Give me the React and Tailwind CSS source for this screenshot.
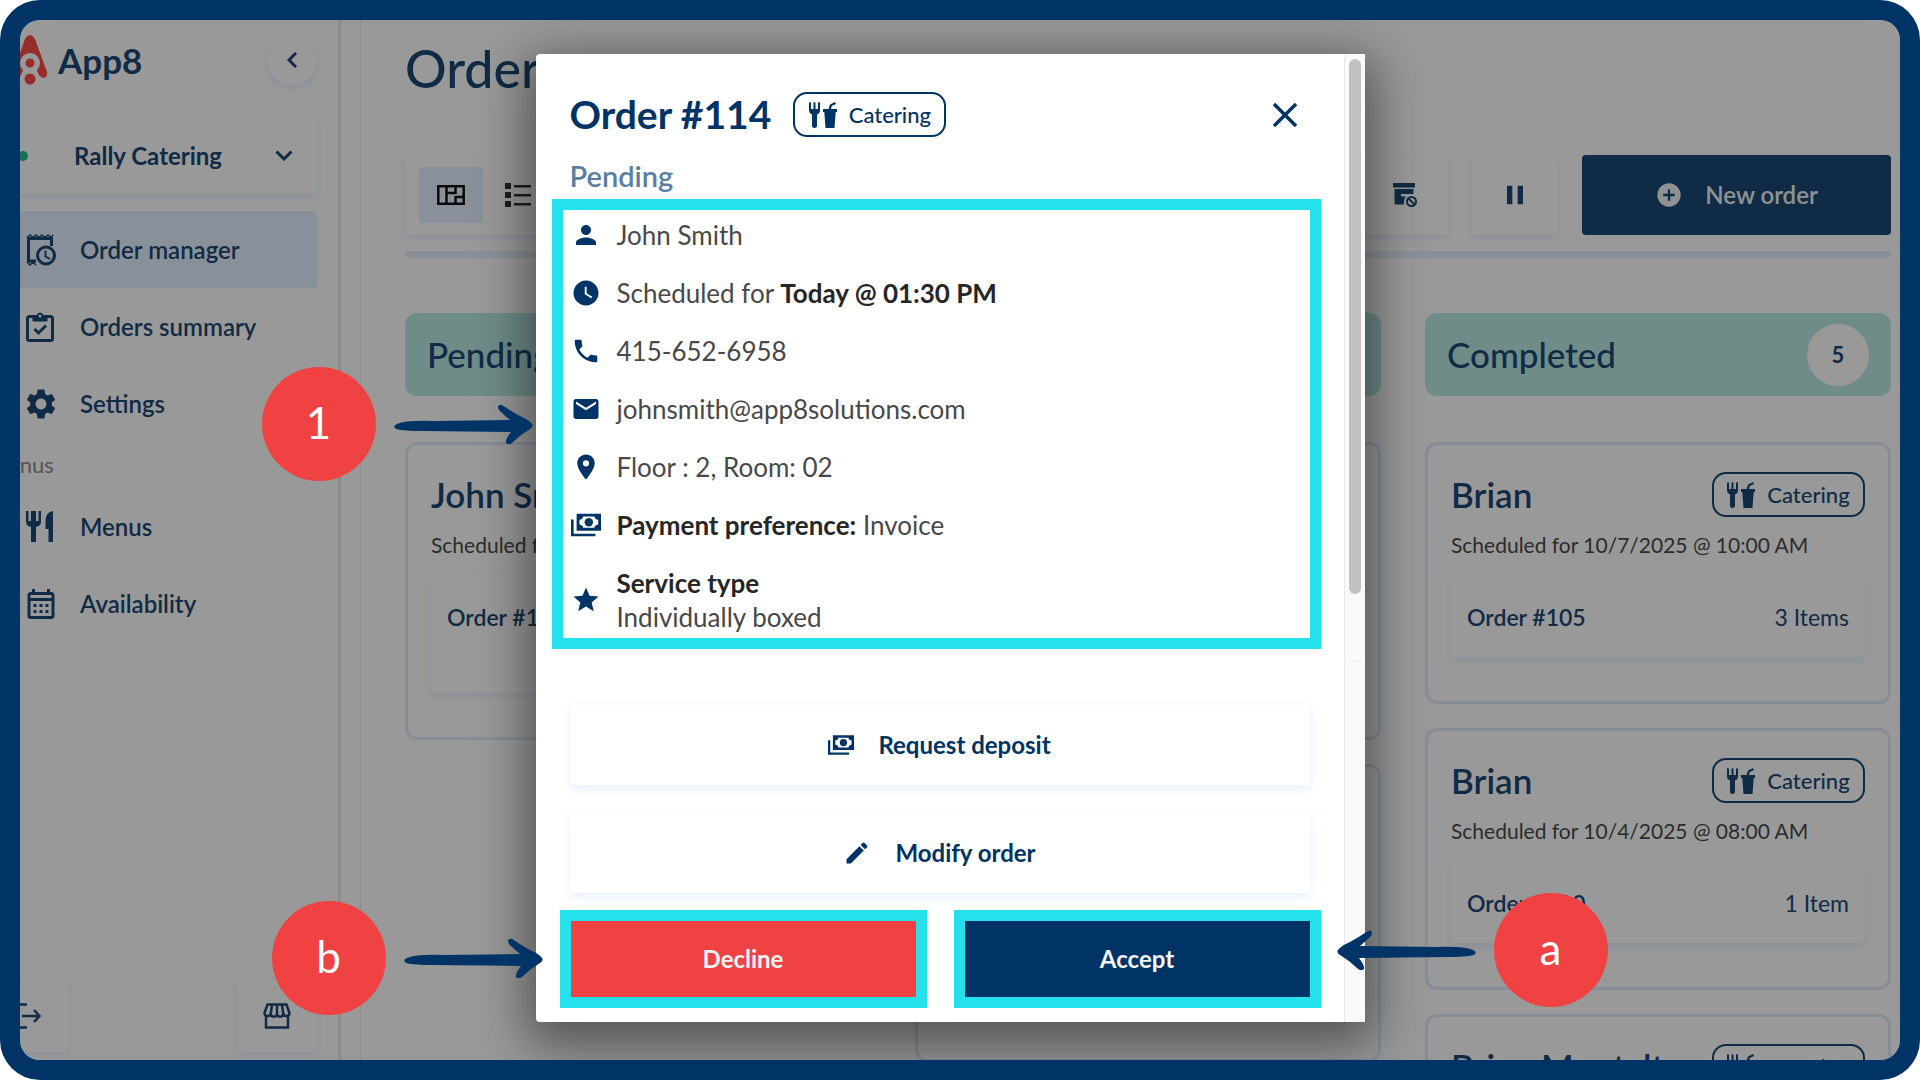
import {
  MdAddCircle,
  MdClose,
  MdEdit,
  MdEmail,
  MdLocationOn,
  MdOutlineCalendarMonth,
  MdPause,
  MdPerson,
  MdPhone,
  MdSettings,
  MdStar,
  MdWatchLater,
} from "react-icons/md";

function AppLogo() {
  return (
    <svg viewBox="0 0 56 50" className="h-[50px] w-14" aria-hidden="true">
      <path d="M23 4Q28 -4 33 4L45 37Q46 42 42 43Q39 43 37 40L28 20L19 40Q17 43 14 43Q10 42 11 37Z" fill="#fb4b46" />
      <circle cx="28" cy="28" r="10" fill="#fff" />
      <circle cx="28" cy="44" r="9" fill="#fff" />
      <circle cx="28" cy="28" r="4.5" fill="#fb4b46" />
      <circle cx="28" cy="44" r="5.5" fill="#fb4b46" />
    </svg>
  );
}

function ReceiptClockIcon() {
  return (
    <svg viewBox="0 0 30 32" className="h-8 w-[30px]" fill="none" stroke="currentColor" strokeWidth="3">
      <path d="M10 27H2.500V4.500H25.500V12" />
      <path d="M1 3.500L4 1L7 3.500L10 1L13 3.500L16 1L19 3.500L22 1L25 3.500L27 1" strokeWidth="1.500" />
      <path d="M1 28L4 31L7 28L10 31" strokeWidth="1.500" />
      <circle cx="20" cy="21.500" r="8.500" />
      <path d="M19.500 16.500V22.500L24 25" strokeWidth="2" />
    </svg>
  );
}

function ClipboardIcon() {
  return (
    <svg viewBox="0 0 30 31" className="h-[31px] w-[30px]" fill="none" stroke="currentColor" strokeWidth="3">
      <rect x="1.500" y="5.500" width="25" height="24" rx="2" />
      <path d="M7 5V10H21V5H17A3 3 0 0 0 11 5Z" fill="currentColor" strokeWidth="1" />
      <circle cx="14" cy="5" r="1.500" fill="#fff" stroke="none" />
      <path d="M8.500 18L12.500 22L20 14.500" />
    </svg>
  );
}

function CutleryIcon() {
  return (
    <svg viewBox="0 0 30 31" className="h-[31px] w-[30px]" fill="currentColor">
      <path d="M0 0H2.500V10H5V0H7.500V0H10V10H12.500V0H15V11Q15 15 10 16V31H5V16Q0 15 0 11Z" />
      <path d="M27 0V31H22.500V18H19.500V9Q20 1 27 0Z" />
    </svg>
  );
}

function StoreIcon() {
  return (
    <svg viewBox="0 0 28 26" className="h-[26px] w-7" fill="none" stroke="currentColor" strokeWidth="2.500">
      <path d="M4.500 1.500H23.500L26.500 10A3.200 3.200 0 0 1 20.300 11A3.200 3.200 0 0 1 14 11A3.200 3.200 0 0 1 7.700 11A3.200 3.200 0 0 1 1.500 10Z" />
      <path d="M9 2L7.700 11M14 2V11M19 2L20.300 11" />
      <path d="M3 12V24.500H25V12" />
    </svg>
  );
}

function LogoutIcon() {
  return (
    <svg viewBox="0 0 34 26" className="h-[26px] w-[34px]" fill="none" stroke="currentColor" strokeWidth="2.500">
      <path d="M20 1.500H8V24.500H20" />
      <path d="M15 13H32M27 7L32.500 13L27 19" />
    </svg>
  );
}

function BoardIcon() {
  return (
    <svg viewBox="0 0 28 20" className="h-5 w-7" fill="none" stroke="#111" strokeWidth="2.500">
      <path d="M1.300 1.300H26.700V18.700H1.300ZM9.500 1V19M18.500 1V9M18.500 11V19M9.500 8H18M18 12H27" />
    </svg>
  );
}

function ListIcon() {
  return (
    <svg viewBox="0 0 26 24" className="h-6 w-[26px]" fill="#333">
      <path d="M0 0H6V6H0ZM0 9H6V15H0ZM0 18H6V24H0ZM9 2H26V4.500H9ZM9 11H26V13.500H9ZM9 20H26V22.500H9Z" />
    </svg>
  );
}

function ArchiveOffIcon() {
  return (
    <svg viewBox="0 0 24 24" className="size-6" fill="currentColor">
      <path d="M0 0H22V4.500H0ZM1.500 6H20.500V11H8V13.500H13Q10.500 16 11 21.500H1.500Z" />
      <g fill="none" stroke="currentColor" strokeWidth="2">
        <circle cx="18.500" cy="18.500" r="4.500" />
        <path d="M15.500 15.500L21.500 21.500" />
      </g>
    </svg>
  );
}

function CashIcon({ className }) {
  return (
    <svg viewBox="0 0 32 24" className={className} fill="currentColor">
      <path d="M6 0H32V18H6ZM13 3Q12.500 6 9 6.500V11.500Q12.500 12 13 15H25Q25.500 12 29 11.500V6.500Q25.500 6 25 3Z" fillRule="evenodd" />
      <circle cx="19" cy="9" r="4.500" />
      <path d="M0 6H2.800V21.200H26V24H0Z" />
    </svg>
  );
}

function CateringBadge() {
  return (
    <span className="flex h-[45px] w-[153px] items-center justify-center gap-3 rounded-[14px] border-2 border-current text-[22px] font-medium">
      <svg viewBox="0 0 28 26" className="h-[26px] w-7" fill="currentColor" aria-hidden="true">
        <path d="M0 1Q1 -1 2 1V7H4.500V1Q5.500 -1 6.500 1V7H9V1Q10 -1 11 1V8Q11 11.500 8 12.500V24Q8 26 5.500 26Q3 26 3 24V12.500Q0 11.500 0 8Z" />
        <path d="M14 7H19.500L21 2.500L26 0L27 2L22.800 4L22 7H28V10H26.700L25.500 26H16.500L15.300 10H14Z" />
      </svg>
      Catering
    </span>
  );
}

const navLink = "flex h-[77px] items-center gap-6 rounded-r pl-[46px] text-2xl font-semibold";

function Sidebar() {
  return (
    <aside className="-ml-10 flex w-[361px] shrink-0 flex-col border-r-3 border-[#e8e8ea] pr-[21px]">
      <div className="flex items-center pt-[15px] pl-[22px]">
        <AppLogo />
        <span className="text-[35px] leading-[50px] font-bold">App8</span>
        <button aria-label="Collapse menu" className="ml-auto grid size-[50px] place-items-center rounded-full shadow-[0_3px_8px_#e3eefc]">
          <svg viewBox="0 0 10 16" className="h-4 w-2.5" fill="none" stroke="currentColor" strokeWidth="3"><path d="M9 1L2 8L9 15" /></svg>
        </button>
      </div>
      <button className="mt-8 flex h-[77px] items-center rounded pr-6 pl-[38px] text-2xl font-bold shadow-[0_3px_8px_#e3eefc]">
        <span className="mr-[46px] size-2.5 rounded-full bg-[#2dbb8b]" />
        Rally Catering
        <svg viewBox="0 0 18 11" className="ml-auto h-[11px] w-[18px]" fill="none" stroke="currentColor" strokeWidth="3"><path d="M1.500 1.500L9 9L16.500 1.500" /></svg>
      </button>
      <nav className="mt-[17px]">
        <a href="#orders" className={`${navLink} bg-[#e6f1ff]`}><ReceiptClockIcon />Order manager</a>
        <a href="#summary" className={navLink}><ClipboardIcon />Orders summary</a>
        <a href="#settings" className={navLink}><MdSettings className="-mx-[3px] size-9" />Settings</a>
        <p className="pt-1 pb-1 pl-2 text-[22px] leading-[38px] text-[#8c8c8c]">Menus</p>
        <a href="#menus" className={navLink}><CutleryIcon />Menus</a>
        <a href="#availability" className={navLink}><MdOutlineCalendarMonth className="-mx-[3px] size-9" />Availability</a>
      </nav>
      <div className="mt-auto mb-2 flex justify-between">
        <button aria-label="Log out" className="grid h-[72px] w-[88px] place-items-center rounded shadow-[0_2px_8px_#e3eefc]"><LogoutIcon /></button>
        <button aria-label="Storefront" className="grid h-[72px] w-20 place-items-center rounded shadow-[0_2px_8px_#e3eefc]"><StoreIcon /></button>
      </div>
    </aside>
  );
}

function OrderCard({ name, when, order, items, tall }) {
  return (
    <article className="shrink-0 rounded-xl border-3 border-[#dfebfa] px-[23px] pt-[27px] pb-11">
      <div className="flex items-center justify-between">
        <h3 className="text-[35px] leading-[45px] font-semibold whitespace-nowrap">{name}</h3>
        <CateringBadge />
      </div>
      <p className="pt-3.5 text-[21px] leading-[28px] whitespace-nowrap text-[#4a4a4a]">{when}</p>
      <div className={`mt-[18px] flex justify-between rounded px-4 pt-6 text-[23px] leading-[32px] shadow-[0_3px_8px_#e3eefc] ${tall ? "h-[116px]" : "h-20"}`}>
        <span className="font-semibold">{order}</span>
        <span>{items}</span>
      </div>
    </article>
  );
}

const columns = [
  {
    title: "Pending",
    count: 1,
    cards: [{ name: "John Smith", when: "Scheduled for Today @ 01:30 PM", order: "Order #114", items: "2 Items", tall: true }],
  },
  {
    title: "Accepted",
    count: 2,
    cards: [
      { name: "Brian", when: "Scheduled for 10/9/2025 @ 11:00 AM", order: "Order #112", items: "2 Items", tall: true },
      { name: "Brian", when: "Scheduled for 10/8/2025 @ 09:00 AM", order: "Order #110", items: "2 Items", tall: true },
    ],
  },
  {
    title: "Completed",
    count: 5,
    cards: [
      { name: "Brian", when: "Scheduled for 10/7/2025 @ 10:00 AM", order: "Order #105", items: "3 Items" },
      { name: "Brian", when: "Scheduled for 10/4/2025 @ 08:00 AM", order: "Order #100", items: "1 Item" },
      { name: "Brian Montalto", when: "Scheduled for 10/3/2025 @ 08:00 AM", order: "Order #98", items: "1 Item" },
    ],
  },
];

function Board() {
  return (
    <main className="ml-[19px] flex min-w-0 flex-1 flex-col border-l border-[#ececf0] pr-[9px] pl-11">
      <h1 className="pt-[13px] text-[52px] leading-[70px] font-medium whitespace-nowrap">Order manager</h1>
      <div className="mt-[52px] flex gap-6">
        <div className="flex items-center gap-[22px] rounded px-3.5 shadow-[0_3px_8px_#e3eefc]">
          <button aria-label="Board view" className="grid h-14 w-16 place-items-center rounded bg-[#e6f1ff]"><BoardIcon /></button>
          <button aria-label="List view"><ListIcon /></button>
        </div>
        <button aria-label="Archive" className="ml-auto grid h-20 w-[86px] place-items-center rounded shadow-[0_3px_8px_#e3eefc]"><ArchiveOffIcon /></button>
        <button aria-label="Pause orders" className="grid h-20 w-[86px] place-items-center rounded shadow-[0_3px_8px_#e3eefc]"><MdPause className="size-8" /></button>
        <button className="flex h-20 w-[309px] items-center justify-center gap-[22px] rounded bg-[#1c4875] text-2xl font-semibold text-[#eef2f6]">
          <MdAddCircle className="size-7" />
          New order
        </button>
      </div>
      <hr className="mt-4 h-[7px] shrink-0 rounded border-0 bg-[#e6f1ff]" />
      <div className="mt-[55px] grid grid-cols-3 gap-11">
        {columns.map((col) => (
          <section key={col.title} className="min-w-0">
            <header className="flex h-[83px] items-center justify-between rounded-xl bg-[#b9e9e3] pr-[22px] pl-[22px]">
              <h2 className="text-[35px] font-medium">{col.title}</h2>
              <span className="grid size-[62px] place-items-center rounded-full bg-white text-[22px] font-bold">{col.count}</span>
            </header>
            <div className="mt-[46px] flex flex-col gap-6">
              {col.cards.map((card) => <OrderCard key={card.order} {...card} />)}
            </div>
          </section>
        ))}
      </div>
    </main>
  );
}

function Arrow({ flip }) {
  return (
    <svg viewBox="0 0 139 40" className={`h-10 w-[139px] ${flip ? "-scale-x-100" : ""}`} fill="#003366" aria-hidden="true">
      <path d="M3 20Q12 16 40 17L116 16Q109 10 105 6Q102 0 108 1Q117 7 126 12Q134 15 138 20Q140 22 136 25Q126 31 119 38Q115 42 112 39Q111 36 117 28L30 27Q10 27 2 25Q-2 22 3 20Z" />
    </svg>
  );
}

function Callout({ label, className, flip }) {
  return (
    <div className={`absolute flex items-center gap-[18px] ${flip ? "flex-row-reverse" : ""} ${className}`}>
      <span className="grid size-[114px] place-items-center rounded-full bg-[#f04243] pb-1 text-[44px] text-white">{label}</span>
      <Arrow flip={flip} />
    </div>
  );
}

const details = [
  { icon: MdPerson, text: "John Smith" },
  { icon: MdWatchLater, text: <>Scheduled for <b className="text-[#262626]">Today @ 01:30 PM</b></> },
  { icon: MdPhone, text: "415-652-6958" },
  { icon: MdEmail, text: "johnsmith@app8solutions.com" },
  { icon: MdLocationOn, text: "Floor : 2, Room: 02" },
  { icon: CashIcon, text: <><b className="text-[#262626]">Payment preference:</b> Invoice</> },
];

const modalButton = "flex h-20 w-full items-center justify-center gap-6 rounded shadow-[0_3px_12px_#e3eefc]";

function OrderDialog() {
  return (
    <div role="dialog" aria-label="Order #114" className="relative w-[829px] rounded bg-white shadow-[0_14px_50px_10px_rgba(0,0,0,0.45)]">
      <div className="flex">
        <div className="flex-1 px-4 pt-[38px] pb-3.5 text-[#003366]">
          <div className="flex items-center gap-[22px] px-[18px]">
            <h2 className="text-[39px] leading-[45px] font-bold">Order #114</h2>
            <CateringBadge />
            <button aria-label="Close" className="-my-2 mr-1 ml-auto"><MdClose className="size-[42px]" /></button>
          </div>
          <p className="mt-5 px-[18px] text-[29px] leading-[38px] font-semibold text-[#5a7ea3]">Pending</p>
          <ul className="mt-1 mr-[7px] border-[11px] border-[#25e1eb] pl-2 text-[26px] text-[#484848]">
            {details.map(({ icon: Icon, text }, i) => (
              <li key={i} className="flex h-[58px] items-center gap-4 pb-2">
                <span className="grid w-[30px] place-items-center text-[#003366]"><Icon className="h-8 w-[30px]" /></span>
                <span>{text}</span>
              </li>
            ))}
            <li className="flex h-20 items-center gap-4 pt-1">
              <MdStar className="h-8 w-[30px] text-[#003366]" />
              <span className="leading-[34px]"><b className="text-[#262626]">Service type</b><br />Individually boxed</span>
            </li>
          </ul>
          <div className="mt-14 flex flex-col gap-7 px-[18px] text-2xl font-bold">
            <button className={modalButton}><CashIcon className="h-5 w-[26px]" />Request deposit</button>
            <button className={modalButton}><MdEdit className="size-7" />Modify order</button>
          </div>
          <div className="mt-[17px] mr-[7px] ml-2 flex gap-[27px] text-2xl font-bold text-[#f4f4f4]">
            <button className="h-[98px] flex-1 border-[11px] border-[#25e1eb] bg-[#f04243]">Decline</button>
            <button className="h-[98px] flex-1 border-[11px] border-[#25e1eb] bg-[#003366]">Accept</button>
          </div>
        </div>
        <div className="w-[21px] border-l border-[#e8e8e8] bg-[#fafafa] px-1 pt-[5px]">
          <div className="mx-auto h-[535px] w-3 rounded-full bg-[#c1c1c1]" />
          <div className="mt-[67px] border-t border-[#efefef]" />
        </div>
      </div>
      <Callout label="1" className="top-[313px] right-full mr-[3px]" />
      <Callout label="b" className="right-full bottom-[7px] -mr-[7px]" />
      <Callout label="a" flip className="bottom-[15px] left-full -ml-7" />
    </div>
  );
}

export default function App() {
  return (
    <div className="h-screen bg-white font-['Lato',sans-serif]">
      <div className="h-full overflow-hidden rounded-[40px] bg-[#003366] p-5">
        <div className="relative flex h-full overflow-hidden rounded-[20px] bg-white text-[#1c4875]">
          <Sidebar />
          <Board />
          <div className="absolute inset-0 flex items-center justify-center bg-black/40 pr-5 pb-1">
            <OrderDialog />
          </div>
        </div>
      </div>
    </div>
  );
}
